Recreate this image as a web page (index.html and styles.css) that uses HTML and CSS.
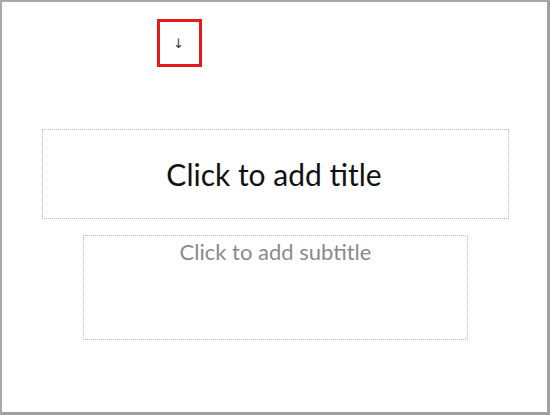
FILE: index.html
```html
<!DOCTYPE html>
<html>
<head>
<meta charset="utf-8">
<link rel="stylesheet" href="styles.css">
</head>
<body>
<div class="slide">
  <div class="marker"><span class="arrow">↓</span></div>
  <div class="ph title-ph"><span class="title-text">Click to add title</span></div>
  <div class="ph sub-ph"><span class="sub-text">Click to add subtitle</span></div>
</div>
</body>
</html>
```
FILE: styles.css
```css
html, body {
  margin: 0;
  padding: 0;
  background: #ffffff;
}
.slide {
  width: 550px;
  height: 415px;
  box-sizing: border-box;
  border-top: 2px solid #a8a8a8;
  border-left: 2px solid #a8a8a8;
  border-right: 3px solid #a0a0a0;
  border-bottom: 3px solid #a0a0a0;
  background: #ffffff;
  display: flex;
  flex-direction: column;
  align-items: flex-start;
  font-family: "Lato", "Liberation Sans", sans-serif;
}
.marker {
  margin-left: 155px;
  margin-top: 17px;
  width: 45px;
  height: 48px;
  box-sizing: border-box;
  border: 3px solid #e41b1b;
  display: flex;
  align-items: center;
  justify-content: center;
}
.arrow {
  font-family: "DejaVu Sans", sans-serif;
  font-size: 13px;
  color: #333333;
  line-height: 1;
  margin-left: -2px;
}
.ph {
  box-sizing: border-box;
  border: 1px dotted #b5b5b5;
  display: flex;
  justify-content: center;
}
.title-ph {
  margin-top: 62px;
  margin-left: 40px;
  width: 467px;
  height: 90px;
  align-items: center;
}
.title-text {
  font-size: 30px;
  color: #111111;
  margin-left: -3px;
}
.sub-ph {
  margin-top: 16px;
  margin-left: 81px;
  width: 385px;
  height: 105px;
  align-items: flex-start;
}
.sub-text {
  margin-top: 2px;
  font-size: 22px;
  color: #8a8a8a;
}
```
